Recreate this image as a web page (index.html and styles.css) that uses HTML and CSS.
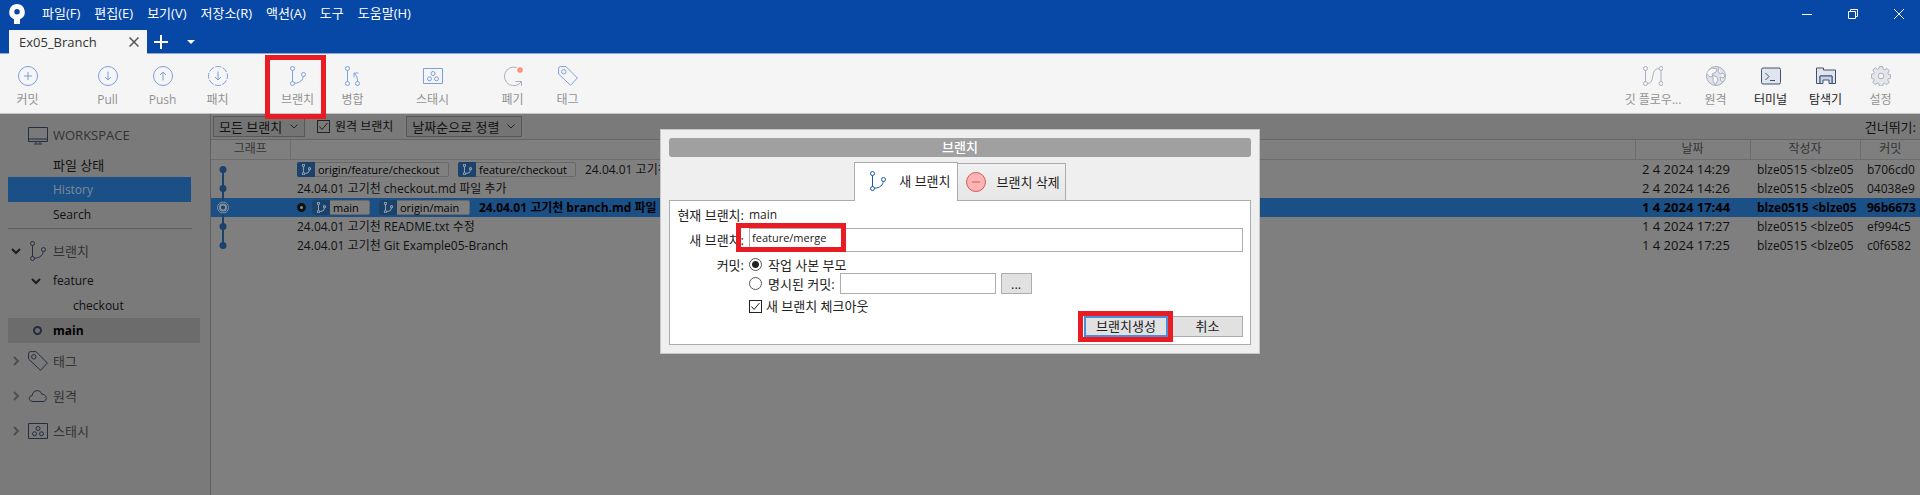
FILE: index.html
```html
<!DOCTYPE html>
<html lang="ko">
<head>
<meta charset="utf-8">
<title>Sourcetree</title>
<link rel="stylesheet" href="styles.css">
</head>
<body>
<svg class="defs" aria-hidden="true">
  <symbol id="i-branch" viewBox="0 0 20 20"><path d="M4.500 4.500v11M6.500 17.200c5.500 0 8.500-3.500 8.800-6.800"/><circle cx="4.500" cy="2.500" r="2"/><circle cx="4.500" cy="17.500" r="2"/><circle cx="15.500" cy="8.500" r="2"/></symbol>
  <symbol id="i-tag" viewBox="0 0 20 20"><path d="M.6 2.500Q.6.600 2.500.600H8L19.400 12 12.500 19.300.600 8z"/><circle cx="5.800" cy="5.800" r="2.200"/></symbol>
  <symbol id="i-stash" viewBox="0 0 20 20"><path d="M.5 2.500h19v15H.500z"/><circle cx="10" cy="7.500" r="2"/><circle cx="6.500" cy="12.800" r="2"/><circle cx="13.500" cy="12.800" r="2"/></symbol>
  <symbol id="i-down" viewBox="0 0 10 10"><path d="M1 3l4 4 4-4"/></symbol>
  <symbol id="i-right" viewBox="0 0 10 10"><path d="M3 1l4 4-4 4"/></symbol>
</svg>

<header class="titlebar">
  <nav class="menu">
    <svg class="logo" width="16" height="20" viewBox="0 0 16 20"><path fill="#fff" fill-rule="evenodd" d="M8 0a8 8 0 0 1 3 15.300V20H5v-4.700A8 8 0 0 1 8 0zm0 5a2.700 2.700 0 1 0 0 5.500A2.700 2.700 0 0 0 8 5z"/></svg>
    <button>파일(F)</button><button>편집(E)</button><button>보기(V)</button><button>저장소(R)</button><button>액션(A)</button><button>도구</button><button>도움말(H)</button>
  </nav>
  <div class="window-controls">
    <button aria-label="최소화"><svg width="12" height="12"><path d="M1 6.500h10"/></svg></button>
    <button aria-label="복원"><svg width="12" height="12"><path d="M1.500 3.500h7v7h-7zM3.500 3.500v-2h7v7h-2"/></svg></button>
    <button aria-label="닫기"><svg width="12" height="12"><path d="M1 1l10 10M11 1L1 11"/></svg></button>
  </div>
  <div class="tabs">
    <div class="repo-tab"><span>Ex05_Branch</span><button aria-label="탭 닫기"><svg width="10" height="10"><path d="M.5.500l9 9M9.500.500l-9 9"/></svg></button></div>
    <button class="tab-add" aria-label="새 탭"><svg width="14" height="14"><path d="M7 0v14M0 7h14"/></svg></button>
    <button class="tab-list" aria-label="탭 목록"><svg width="8" height="4"><path d="M0 0h8L4 4z"/></svg></button>
  </div>
</header>

<div class="toolbar">
  <div class="tool-group"><button class="tool"><svg viewBox="0 0 20 20"><circle cx="10" cy="10" r="9.500"/><path d="M10 6v8M6 10h8"/></svg>커밋</button></div>
  <div class="tool-group">
    <button class="tool"><svg viewBox="0 0 20 20"><circle cx="10" cy="10" r="9.500"/><path d="M10 5.500v8.500M7 11l3 3 3-3"/></svg>Pull</button>
    <button class="tool"><svg viewBox="0 0 20 20"><circle cx="10" cy="10" r="9.500"/><path d="M10 14.500V6M7 9l3-3 3 3"/></svg>Push</button>
    <button class="tool"><svg viewBox="0 0 20 20"><circle cx="10" cy="10" r="9.500" stroke-dasharray="6 1.460" stroke-dashoffset="3"/><path d="M10 5.500v8.500M7 11l3 3 3-3"/></svg>패치</button>
  </div>
  <div class="tool-group">
    <button class="tool"><svg><use href="#i-branch"/></svg>브랜치<span class="mark mark-tool"></span></button>
    <button class="tool"><svg viewBox="0 0 20 20"><path d="M4.500 4.500v11M14.500 15.500c0-4-1-6-3-8M11 11.500V7h4.500"/><circle cx="4.500" cy="2.500" r="2"/><circle cx="4.500" cy="17.500" r="2"/><circle cx="14.500" cy="17.500" r="2"/></svg>병합</button>
  </div>
  <div class="tool-group"><button class="tool"><svg><use href="#i-stash"/></svg>스태시</button></div>
  <div class="tool-group">
    <button class="tool gray"><svg viewBox="0 0 20 20"><path d="M13.500 1.500A9.300 9.300 0 1 0 18.500 15.500M12.500 15.500h6v4.500"/><circle cx="17" cy="4" r="2.800" fill="#ff8f7e" stroke="none"/></svg>폐기</button>
    <button class="tool"><svg><use href="#i-tag"/></svg>태그</button>
  </div>
  <div class="tool-group right">
    <button class="tool gray wide"><svg viewBox="0 0 20 20"><path d="M2.500 4.500v11M18 4.500v11M4.500 17.500C13 17.500 6.500 2.500 16 2.500"/><circle cx="2.500" cy="2.500" r="2"/><circle cx="2.500" cy="17.500" r="2"/><circle cx="18" cy="2.500" r="2"/><circle cx="18" cy="17.500" r="2"/></svg>깃 플로우...</button>
    <button class="tool gray"><svg viewBox="0 0 20 20"><circle cx="10" cy="10" r="9.500" fill="#dfe2ea"/><path d="M3 4l3-2 5 1-1 3-4 2 1 2-3 1-3-3M7 9l4 2 1 3-3 5-2-4zM13 1l-1 4 2 3 3-1 2 3-2 2-3-1 1 4 2 1" fill="#f8f8f8"/></svg>원격</button>
    <button class="tool dark"><svg viewBox="0 0 20 20"><rect x=".5" y="2" width="19" height="16" rx="1.500" fill="#dfe4ef"/><path d="M4.500 7l3.500 3.500L4.500 14M9 14.500h5"/></svg>터미널</button>
    <button class="tool dark"><svg viewBox="0 0 20 20"><path d="M.5 17.500V2h7v2h12v13.500h-3.500V10H4v7.500z" fill="#dfe4ef"/><path d="M4 17.500V10h12v7.500h-3V14H7v3.500z" fill="#c9d1e6"/></svg>탐색기</button>
    <button class="tool gray"><svg viewBox="0 0 20 20"><path fill="#e4e6eb" d="M8.300.600h3.400l.5 2.600 1.500.7 2.200-1.500 2.400 2.400-1.500 2.200.6 1.400 2.200.4v3.400l-2.300.4-.6 1.500 1.500 2.200-2.400 2.400-2.200-1.500-1.500.6-.4 2.200H8.300l-.5-2.300-1.500-.6-2.200 1.500-2.300-2.400 1.400-2.100-.6-1.500-2.200-.4V8.300l2.300-.5.6-1.400-1.500-2.200L4.200 1.900l2.200 1.500 1.400-.6z"/><circle cx="10" cy="10" r="2.800" fill="#f5f5f5"/></svg>설정</button>
  </div>
</div>

<div class="body">
  <aside class="sidebar">
    <h2 class="side-head workspace"><svg class="side-icon" viewBox="0 0 20 20"><path d="M.5 2.500h19v14H.500zM.500 14h19M8 16.500v2M12 16.500v2M6 19h8"/></svg>WORKSPACE</h2>
    <a class="side-row files" href="#">파일 상태</a>
    <a class="side-row selected" href="#">History</a>
    <a class="side-row" href="#">Search</a>
    <hr>
    <h2 class="side-head"><svg class="chev dk"><use href="#i-down"/></svg><svg class="side-icon"><use href="#i-branch"/></svg>브랜치</h2>
    <a class="side-row" href="#"><svg class="chev dk inner"><use href="#i-down"/></svg>feature</a>
    <a class="side-row deep" href="#">checkout</a>
    <a class="side-row current" href="#"><span class="ring"></span>main</a>
    <h2 class="side-head"><svg class="chev"><use href="#i-right"/></svg><svg class="side-icon"><use href="#i-tag"/></svg>태그</h2>
    <h2 class="side-head"><svg class="chev"><use href="#i-right"/></svg><svg class="side-icon" viewBox="0 0 20 20"><path d="M5 15.500C0 15.500.2 9.800 4.200 9.600 4.500 3.500 12.500 3 13.800 8.200 19.500 8 19.500 15.500 15 15.500z"/></svg>원격</h2>
    <h2 class="side-head"><svg class="chev"><use href="#i-right"/></svg><svg class="side-icon"><use href="#i-stash"/></svg>스태시</h2>
  </aside>

  <main class="content">
    <div class="filters">
      <select class="branches" aria-label="브랜치 필터"><option>모든 브랜치</option></select>
      <label class="check"><input type="checkbox" checked>원격 브랜치</label>
      <select class="order" aria-label="정렬"><option>날짜순으로 정렬</option></select>
      <span class="jump">건너뛰기:</span>
    </div>
    <table class="log">
      <colgroup><col class="c-graph"><col><col class="c-date"><col class="c-author"><col class="c-hash"></colgroup>
      <thead><tr><th>그래프</th><th></th><th>날짜</th><th>작성자</th><th>커밋</th></tr></thead>
      <tbody>
        <tr><td class="graph"><svg width="24" height="19"><path d="M12 9v10"/><circle cx="12" cy="9.500" r="3.500"/></svg></td><td><span class="refs"><span class="ref long"><i><svg><use href="#i-branch"/></svg></i>origin/feature/checkout</span><span class="ref mid"><i><svg><use href="#i-branch"/></svg></i>feature/checkout</span></span>24.04.01 고기천</td><td class="date">2 4 2024 14:29</td><td>blze0515 &lt;blze05</td><td>b706cd0</td></tr>
        <tr><td class="graph"><svg width="24" height="19"><path d="M12 0v19"/><circle cx="12" cy="9.500" r="3.500"/></svg></td><td>24.04.01 고기천 checkout.md 파일 추가</td><td class="date">2 4 2024 14:26</td><td>blze0515 &lt;blze05</td><td>04038e9</td></tr>
        <tr class="head"><td class="graph"><svg width="24" height="19"><path d="M12 0v19"/><circle class="halo" cx="12" cy="9.500" r="5.500"/><circle class="core" cx="12" cy="9.500" r="3"/></svg></td><td><span class="refs"><span class="dot"></span><span class="ref tiny"><i><svg><use href="#i-branch"/></svg></i>main</span><span class="ref short"><i><svg><use href="#i-branch"/></svg></i>origin/main</span></span>24.04.01 고기천 branch.md 파일</td><td class="date">1 4 2024 17:44</td><td>blze0515 &lt;blze05</td><td>96b6673</td></tr>
        <tr><td class="graph"><svg width="24" height="19"><path d="M12 0v19"/><circle cx="12" cy="9.500" r="3.500"/></svg></td><td>24.04.01 고기천 README.txt 수정</td><td class="date">1 4 2024 17:27</td><td>blze0515 &lt;blze05</td><td>ef994c5</td></tr>
        <tr><td class="graph"><svg width="24" height="19"><path d="M12 0v9"/><circle cx="12" cy="9.500" r="3.500"/></svg></td><td>24.04.01 고기천 Git Example05-Branch</td><td class="date">1 4 2024 17:25</td><td>blze0515 &lt;blze05</td><td>c0f6582</td></tr>
      </tbody>
    </table>
  </main>
</div>

<dialog class="dialog" open aria-labelledby="dlg-title">
  <h1 id="dlg-title">브랜치</h1>
  <div class="dlg-tabs">
    <button class="dlg-tab active"><svg><use href="#i-branch"/></svg>새 브랜치</button>
    <button class="dlg-tab"><svg class="minus" viewBox="0 0 20 20"><circle cx="10" cy="10" r="9.500"/><path d="M6 10h8"/></svg>브랜치 삭제</button>
  </div>
  <form class="panel">
    <div class="field"><span class="lbl">현재 브랜치:</span><span class="value">main</span></div>
    <div class="field name"><label class="lbl" for="name">새 브랜치:</label><input id="name" type="text" value="feature/merge"><span class="mark mark-name"></span></div>
    <div class="field commit"><span class="lbl">커밋:</span>
      <div class="options">
        <label class="radio"><input type="radio" name="c" checked>작업 사본 부모</label>
        <div class="specified"><label class="radio"><input type="radio" name="c">명시된 커밋:</label><input type="text" aria-label="명시된 커밋"><button type="button">...</button></div>
        <label class="check"><input type="checkbox" checked>새 브랜치 체크아웃</label>
      </div>
    </div>
    <div class="actions"><button type="button" class="primary">브랜치생성<span class="mark mark-ok"></span></button><button type="button">취소</button></div>
  </form>
</dialog>
</body>
</html>
```
FILE: styles.css
```css
* { box-sizing: border-box; }
body {
  margin: 0;
  min-height: 100vh;
  display: flex;
  flex-direction: column;
  position: relative;
  background: #7f7f7f;
  font: 12px/18px "Open Sans", "Noto Sans CJK KR", sans-serif;
  color: #111;
}
button, input, select { font: inherit; color: inherit; }
button { padding: 0; border: 0; background: none; }
a { color: inherit; text-decoration: none; }
svg { fill: none; stroke: currentColor; flex: none; }
.defs { position: absolute; width: 0; height: 0; }

.titlebar {
  display: grid;
  grid-template-columns: 1fr auto;
  grid-template-rows: 30px 24px;
  background: #0747a6;
  border-bottom: 1px solid #8aa6d4;
  height: 54px;
  color: #fff;
}
.menu { display: flex; align-items: center; gap: 14px; padding: 0 0 2px 9px; font-size: 13px; }
.menu button { height: 26px; margin-bottom: 2px; }
.logo { stroke: none; margin-right: 3px; }
.window-controls { display: flex; align-items: center; gap: 34px; padding-right: 15px; padding-bottom: 3px; }
.window-controls button { display: flex; }
.tabs { display: flex; align-items: stretch; grid-column: 1 / -1; padding-left: 9px; }
.repo-tab {
  display: flex;
  align-items: center;
  justify-content: space-between;
  width: 138px;
  padding: 0 8px 0 10px;
  background: #f5f5f5;
  color: #333;
  font-size: 13px;
}
.repo-tab button, .tab-add, .tab-list { display: flex; align-items: center; }
.tab-add svg { stroke-width: 2; }
.repo-tab svg { stroke: #555; stroke-width: 1.5; }
.tab-add { margin-left: 7px; }
.tab-list { margin-left: 19px; }
.tab-list svg { fill: #fff; stroke: none; }

.toolbar { display: flex; gap: 25px; background: #f5f5f5; height: 60px; border-bottom: 1px solid #c4c4c4; }
.tool-group { display: flex; }
.tool-group.right { margin-left: auto; padding-right: 12px; }
.tool {
  position: relative;
  display: flex;
  flex-direction: column;
  align-items: center;
  width: 55px;
  padding-top: 12px;
  gap: 5px;
  color: #929292;
  white-space: nowrap;
}
.tool.wide { width: 70px; }
.tool svg { width: 20px; height: 20px; stroke: #7ba0dc; }
.tool.gray svg { stroke: #a9afbd; }
.tool.dark { color: #222; }
.tool.dark svg { stroke: #42526e; }
.mark { position: absolute; border: 5px solid #e91c24; pointer-events: none; z-index: 5; }
.mark-tool { left: -5px; top: 1px; width: 61px; height: 64px; }

.body { display: flex; flex: 1; }
.sidebar { width: 211px; padding: 4px 8px; background: #7a7a7a; border-right: 1px solid #5f5f5f; }
.side-head {
  position: relative;
  display: flex;
  align-items: center;
  height: 35px;
  margin: 0;
  padding-left: 20px;
  gap: 5px;
  font-size: 13px;
  font-weight: 400;
  color: #333;
}
.side-icon { width: 20px; height: 20px; color: #252d40; }
.chev { position: absolute; left: 3px; width: 10px; height: 10px; color: #505050; stroke-width: 2; }
.chev.dk { color: #1c1c1c; }
.chev.inner { left: 23px; }
.workspace { height: 34px; }
.side-row { position: relative; display: flex; align-items: center; height: 25px; padding-left: 45px; margin-right: 11px; }
.side-row.files { font-size: 13px; }
.side-row.selected { background: #1b5087; color: #7f8a96; }
.side-row.deep { padding-left: 65px; }
.side-row.current { margin-right: 2px; background: #6c6c6c; font-weight: 700; color: #000; }
.ring { position: absolute; left: 25px; width: 9px; height: 9px; border: 2px solid #232c3b; border-radius: 50%; }
.sidebar hr { margin: 1px 10px 4px 0; border: 0; border-top: 1px solid #5e5e5e; }

.content { flex: 1; min-width: 0; }
.filters { display: flex; align-items: center; height: 26px; padding: 0 4px 0 2px; border-bottom: 1px solid #666; background: #7a7a7a; }
.filters select {
  appearance: none;
  height: 21px;
  padding: 0 20px 0 5px;
  border: 1px solid #585858;
  border-radius: 0;
  font-size: 13px;
  background: #747474 url("data:image/svg+xml,%3Csvg xmlns='http://www.w3.org/2000/svg' width='8' height='5'%3E%3Cpath d='M.5.5L4 4 7.500.5' fill='none' stroke='%23222'/%3E%3C/svg%3E") no-repeat right 6px center;
}
.branches { width: 92px; }
.order { width: 116px; }
.check { display: flex; align-items: center; gap: 4px; }
.filters .check { margin: 0 13px 0 12px; gap: 5px; }
.check input {
  appearance: none;
  width: 13px;
  height: 13px;
  margin: 0;
  border: 1px solid #222;
  background: url("data:image/svg+xml,%3Csvg xmlns='http://www.w3.org/2000/svg' width='11' height='11'%3E%3Cpath d='M1.500 5.500l2.500 3 5.500-6.500' fill='none' stroke='%23222'/%3E%3C/svg%3E") center no-repeat;
}
.jump { margin-left: auto; font-size: 13px; }

.log { width: 100%; table-layout: fixed; border-collapse: collapse; }
.c-graph { width: 79px; }
.c-date { width: 115px; }
.c-author { width: 110px; }
.c-hash { width: 60px; }
.log th { height: 19px; padding: 0; font-weight: 400; color: #333; border-right: 1px solid #6c6c6c; border-bottom: 1px solid #6c6c6c; }
.log th:last-child { border-right: 0; }
.log td { height: 19px; padding: 0 0 0 7px; overflow: hidden; white-space: nowrap; line-height: 19px; }
.log td.graph { padding: 0; }
.log td.date { font-size: 13px; }
.graph svg { display: block; stroke: #1b426b; fill: #1b426b; stroke-width: 2; }
.graph circle { stroke: none; }
.graph .halo { fill: #1b5087; stroke: #858f99; stroke-width: 1; }
.graph .core { fill: #1b426b; stroke: #858f99; stroke-width: 2; }
.head { background: #1b5087; font-weight: 700; color: #000; }
.refs { display: inline-flex; align-items: center; gap: 9px; height: 19px; margin-right: 9px; vertical-align: top; }
.ref { display: inline-flex; align-items: center; gap: 3px; height: 15px; border: 1px solid #686868; border-radius: 2px; background: #808080; font-size: 11px; font-weight: 400; line-height: 13px; color: #000; }
.ref i { display: flex; align-items: center; justify-content: center; width: 18px; height: 15px; margin-left: -1px; background: #1b426b; border-radius: 2px 0 0 2px; }
.ref svg { width: 11px; height: 11px; stroke: #8f9caa; stroke-width: 2; }
.ref.long { width: 152px; }
.ref.mid { width: 118px; }
.ref.tiny { width: 58px; }
.ref.short { width: 91px; }
.dot { width: 9px; height: 9px; border: 3px solid #111; border-radius: 50%; background: #8c8c8c; margin-right: -3px; }

.dialog {
  position: absolute;
  top: 129px;
  left: 0;
  right: 0;
  width: 600px;
  margin: 0 auto;
  padding: 8px;
  border: 1px solid #c8c8c8;
  background: #efefef;
  color: #222;
  font-size: 13px;
}
.dialog h1 { margin: 0; height: 19px; border-radius: 3px; background: #a0a0a0; color: #fff; font-size: 13px; line-height: 18px; font-weight: 500; text-align: center; }
.dlg-tabs { display: flex; justify-content: center; align-items: flex-end; margin-top: 5px; }
.dlg-tab {
  display: flex;
  align-items: center;
  gap: 11px;
  height: 37px;
  padding: 0 5px 0 8px;
  border: 1px solid #acacac;
  border-left: 0;
  border-bottom: 0;
  background: linear-gradient(#f1f1f1, #e6e6e6);
}
.dlg-tab.active { height: 39px; padding: 0 6px 2px 13px; border-left: 1px solid #acacac; background: #fff; margin-bottom: -1px; z-index: 1; }
.dlg-tab svg { width: 20px; height: 20px; stroke: #1d55b0; }
.dlg-tab .minus { fill: #ffb3b3; stroke: #cf5a5a; }
.panel { display: flex; flex-direction: column; min-height: 145px; margin: 0; padding: 5px 7px 7px; border: 1px solid #acacac; background: #fff; }
.field { position: relative; display: flex; gap: 5px; }
.lbl { width: 67px; text-align: right; white-space: nowrap; }
.value { font-size: 12px; }
.panel input[type="text"] { border: 1px solid #acacac; padding: 0 2px; background: #fff; font-size: 11px; }
.name { margin-top: 4px; align-items: center; }
.panel .name input { flex: 1; height: 24px; padding-bottom: 6px; }
.mark-name { left: 59px; top: -5px; width: 110px; height: 29px; }
.commit { margin-top: 4px; }
.options { display: flex; flex-direction: column; align-items: flex-start; }
.radio { display: flex; align-items: center; gap: 6px; height: 17px; white-space: nowrap; }
.radio input { appearance: none; width: 13px; height: 13px; margin: 0; border: 1px solid #555; border-radius: 50%; background: #fff; }
.radio input:checked { background: radial-gradient(circle, #222 3px, #fff 4px); }
.specified { display: flex; align-items: center; gap: 5px; height: 21px; }
.specified input[type="text"] { width: 156px; height: 21px; }
.specified button { width: 31px; height: 21px; border: 1px solid #acacac; background: #e1e1e1; }
.options .check { margin-top: 3px; }
.actions { display: flex; justify-content: flex-end; gap: 4px; margin-top: auto; }
.actions button { position: relative; width: 71px; height: 21px; border: 1px solid #acacac; background: #e1e1e1; line-height: 17px; }
.actions .primary { width: 84px; border: 2px solid #4a8ddb; }
.mark-ok { left: -8px; top: -7px; width: 95px; height: 31px; }
```
